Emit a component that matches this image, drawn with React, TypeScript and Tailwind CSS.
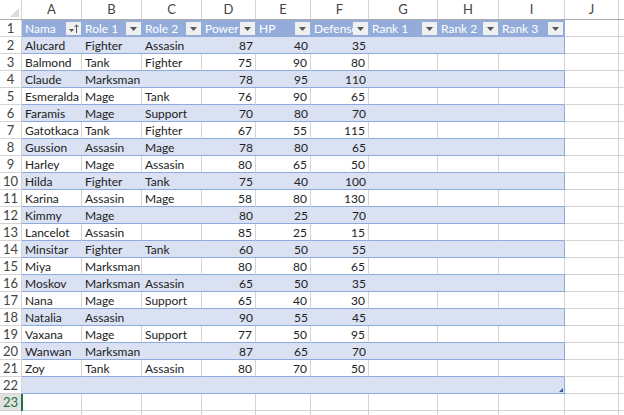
import { ReactElement, ReactNode } from "react";

type Row = [string, string, string, number, number, number];

const rows: Row[] = [
    ["Alucard", "Fighter", "Assasin", 87, 40, 35],
    ["Balmond", "Tank", "Fighter", 75, 90, 80],
    ["Claude", "Marksman", "", 78, 95, 110],
    ["Esmeralda", "Mage", "Tank", 76, 90, 65],
    ["Faramis", "Mage", "Support", 70, 80, 70],
    ["Gatotkaca", "Tank", "Fighter", 67, 55, 115],
    ["Gussion", "Assasin", "Mage", 78, 80, 65],
    ["Harley", "Mage", "Assasin", 80, 65, 50],
    ["Hilda", "Fighter", "Tank", 75, 40, 100],
    ["Karina", "Assasin", "Mage", 58, 80, 130],
    ["Kimmy", "Mage", "", 80, 25, 70],
    ["Lancelot", "Assasin", "", 85, 25, 15],
    ["Minsitar", "Fighter", "Tank", 60, 50, 55],
    ["Miya", "Marksman", "", 80, 80, 65],
    ["Moskov", "Marksman", "Assasin", 65, 50, 35],
    ["Nana", "Mage", "Support", 65, 40, 30],
    ["Natalia", "Assasin", "", 90, 55, 45],
    ["Vaxana", "Mage", "Support", 77, 50, 95],
    ["Wanwan", "Marksman", "", 87, 65, 70],
    ["Zoy", "Tank", "Assasin", 80, 70, 50],
];

const letters = ["A", "B", "C", "D", "E", "F", "G", "H", "I", "J"];
const headers = ["Nama", "Role 1", "Role 2", "Power", "HP", "Defense", "Rank 1", "Rank 2", "Rank 3"];

// column widths, written out so tailwind picks them up
const widths = [
    "w-[60px]", "w-[60px]", "w-[60px]", "w-[54px]", "w-[55px]",
    "w-[58px]", "w-[69px]", "w-[61px]", "w-[66px]", "w-[54px]",
];

const FilterBox = ({ sorted }: { sorted?: boolean }): ReactElement => (
    <span className="absolute right-[1px] top-[2px] flex h-[13px] w-[15px] items-center justify-center bg-[#f0f0f0]">
        {sorted ? (
            <svg width="15" height="13" viewBox="0 0 15 13">
                <path d="M3 7h5l-2.5 3z" fill="#555" />
                <path d="M10.5 3v8" stroke="#555" strokeWidth="1" />
                <path d="M8.5 5l2-2.2 2 2.2" stroke="#555" strokeWidth="1" fill="none" />
            </svg>
        ) : (
            <svg width="15" height="13" viewBox="0 0 15 13">
                <path d="M4 5h7l-3.5 4z" fill="#555" />
            </svg>
        )}
    </span>
);

const RowHead = ({ n, active }: { n?: number; active?: boolean }): ReactElement => (
    <div
        className={
            active
                ? "flex h-[17px] w-[22px] shrink-0 items-center justify-center border-r border-b border-[#d4d4d4] bg-[#e1e1e1] text-[13px] text-[#217346]"
                : "flex h-[17px] w-[22px] shrink-0 items-center justify-center border-r border-b border-[#d4d4d4] text-[13px] text-[#444]"
        }
    >
        {n}
    </div>
);

const Cell = ({
    col,
    className,
    children,
}: {
    col: number;
    className: string;
    children?: ReactNode;
}): ReactElement => (
    <div className={`relative flex h-[17px] shrink-0 items-center whitespace-nowrap pt-[1px] ${widths[col]} ${className}`}>
        {children}
    </div>
);

const App = (): ReactElement => {
    return (
        <div className="h-[415px] w-full overflow-hidden bg-white font-['Lato','Liberation_Sans',sans-serif] text-[12px] leading-none text-[#222]">
            {/* column letters */}
            <div className="flex h-[20px] border-b border-[#ababab]">
                <div className="relative h-full w-[22px] shrink-0 border-r border-[#d4d4d4]">
                    <svg className="absolute bottom-[2px] right-[2px]" width="9" height="9" viewBox="0 0 9 9">
                        <path d="M9 0v9H0z" fill="#dcdcdc" />
                    </svg>
                </div>
                {letters.map ((l, i) => (
                    <div
                        key={l}
                        className={`flex h-full shrink-0 items-center justify-center border-r border-[#d4d4d4] text-[13px] text-[#444] ${widths[i]}`}
                    >
                        {l}
                    </div>
                ))}
                <div className="flex-1" />
            </div>

            {/* table header row */}
            <div className="flex">
                <RowHead n={1} />
                {headers.map ((h, i) => (
                    <Cell
                        key={h}
                        col={i}
                        className={`overflow-hidden bg-[#93acda] pl-[3px] text-white ${i === 8 ? "border-r border-[#8ea9db]" : ""}`}
                    >
                        {h}
                        <FilterBox sorted={i === 0} />
                    </Cell>
                ))}
                <Cell col={9} className="border-r border-b border-[#d4d4d4]" />
                <div className="h-[17px] flex-1 border-b border-[#d4d4d4]" />
            </div>

            {/* data rows */}
            {rows.map ((r, idx) => {
                const banded = idx % 2 === 0;
                const base = banded
                    ? "border-b border-[#8ea9db] bg-[#d9e1f2]"
                    : "border-b border-r border-b-[#8ea9db] border-r-[#d4d4d4]";
                return (
                    <div key={r[0]} className="flex">
                        <RowHead n={idx + 2} />
                        {r.map ((v, i) => (
                            <Cell
                                key={i}
                                col={i}
                                className={`${base} ${i >= 3 ? "justify-end pr-[3px]" : "pl-[3px]"}`}
                            >
                                {v}
                            </Cell>
                        ))}
                        {[6, 7, 8].map ((i) => (
                            <Cell
                                key={i}
                                col={i}
                                className={i === 8 ? `${base} border-r border-r-[#8ea9db]` : base}
                            />
                        ))}
                        <Cell col={9} className="border-r border-b border-[#d4d4d4]" />
                        <div className="h-[17px] flex-1 border-b border-[#d4d4d4]" />
                    </div>
                );
            })}

            {/* empty banded row 22 */}
            <div className="flex">
                <RowHead n={22} />
                {[0, 1, 2, 3, 4, 5, 6, 7, 8].map ((i) => (
                    <Cell
                        key={i}
                        col={i}
                        className={
                            i === 8
                                ? "border-r border-b border-[#8ea9db] bg-[#d9e1f2]"
                                : "border-b border-[#8ea9db] bg-[#d9e1f2]"
                        }
                    >
                        {i === 8 && (
                            <svg className="absolute bottom-[1px] right-[1px]" width="4" height="4" viewBox="0 0 4 4">
                                <path d="M4 0v4H0z" fill="#3b5a99" />
                            </svg>
                        )}
                    </Cell>
                ))}
                <Cell col={9} className="border-r border-b border-[#d4d4d4]" />
                <div className="h-[17px] flex-1 border-b border-[#d4d4d4]" />
            </div>

            {/* plain rows below the table */}
            {[23, 24].map ((n) => (
                <div key={n} className="flex">
                    <RowHead n={n === 23 ? n : undefined} active={n === 23} />
                    {letters.map ((l, i) => (
                        <Cell key={l} col={i} className="border-r border-b border-[#d4d4d4]">
                            {n === 23 && i === 0 && (
                                <span className="absolute -left-[1px] top-0 h-[17px] w-[2px] bg-[#217346]" />
                            )}
                        </Cell>
                    ))}
                    <div className="h-[17px] flex-1 border-b border-[#d4d4d4]" />
                </div>
            ))}
        </div>
    );
};

export default App;
